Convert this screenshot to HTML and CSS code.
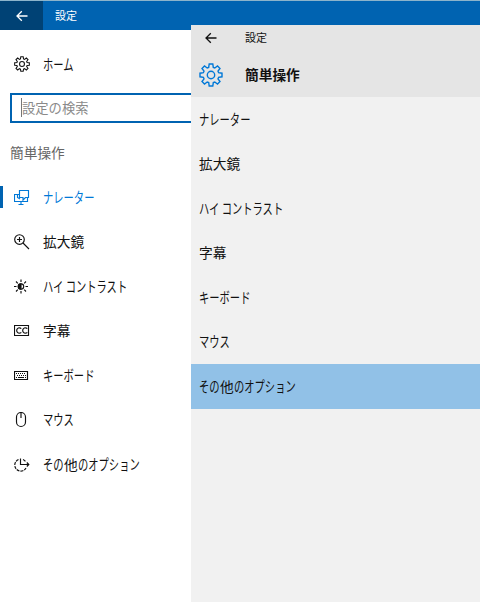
FILE: index.html
```html
<!DOCTYPE html>
<html lang="ja">
<head>
  <meta charset="UTF-8">
  <title>設定</title>
  <meta name="viewport" content="width=device-width, initial-scale=1.0">
  <link rel="stylesheet" href="styles.css">
</head>
<body>

  <!-- shared gear outline -->
  <svg class="defs" width="0" height="0">
    <symbol id="gear" viewBox="0 0 24 24">
      <path d="M9.7 4.4 10.2 1h3.6l.5 3.4 1.5.6 2.7-2 2.5 2.5-2 2.7.6 1.5 3.4.5v3.6l-3.4.5-.6 1.5 2 2.7-2.5 2.5-2.7-2-1.5.6-.5 3.4h-3.6l-.5-3.4-1.5-.6-2.7 2L3 18.500l2-2.700-.6-1.500L1 13.800v-3.600l3.400-.5.6-1.500L3 5.500 5.500 3l2.700 2z"/>
      <circle cx="12" cy="12" r="3.700"/>
    </symbol>
  </svg>

  <div class="window">
    <header class="titlebar">
      <div class="back">
        <svg class="arrow" width="12" height="12" viewBox="0 0 12 12"><path d="M11.500 6H1M5.800 1.200 1 6l4.800 4.800"/></svg>
      </div>
      <span class="title">設定</span>
    </header>

    <nav class="sidebar">
      <a class="item home">
        <svg class="icon" width="16" height="16"><use href="#gear"/></svg>
        <span class="kana">ホーム</span>
      </a>
      <div class="search"><span class="caret"></span>設定の検索</div>
      <h2>簡単操作</h2>
      <a class="item active">
        <svg class="icon" width="16" height="16" viewBox="0 0 16 16"><path d="M5.500.5h9v7h-3l-2.500 2.500v-2.500H5.500zM5.500 4.500h-5v7h13v-4M7 11.500v3M4.500 14.500h5M3.500 4.500v3l2.500 1.500"/></svg>
        <span class="kana">ナレーター</span>
      </a>
      <a class="item">
        <svg class="icon" width="16" height="16" viewBox="0 0 16 16"><circle cx="5.500" cy="5.500" r="4.800"/><path d="M9 9l6 6M5.500 3v5M3 5.500h5"/></svg>
        <span>拡大鏡</span>
      </a>
      <a class="item">
        <svg class="icon" width="16" height="16" viewBox="0 0 16 16"><circle cx="7" cy="7.500" r="2.700"/><path class="solid" d="M7 4.800a2.700 2.700 0 0 0 0 5.400z"/><path d="M7 .5V3M7 12v2.500M0 7.500h2.500M11.500 7.500H14M2 2.500l1.800 1.800M10.200 10.700l1.800 1.800M2 12.500l1.800-1.800M10.200 4.300 12 2.500"/></svg>
        <span class="kana">ハイ コントラスト</span>
      </a>
      <a class="item">
        <svg class="icon" width="16" height="16" viewBox="0 0 16 16"><path d="M.5 2.500h14v10H.5zM7.300 5.600A2.700 2.700 0 1 0 7.300 9.400M13.300 5.600a2.700 2.700 0 1 0 0 3.800"/></svg>
        <span>字幕</span>
      </a>
      <a class="item">
        <svg class="icon" width="16" height="16" viewBox="0 0 16 16"><path d="M.5 3.500h13v8H.5z"/><path class="keys" d="M2 5.500h10M3 7.500h9"/><path d="M4 9.500h6M2 9.500h1M11 9.500h1"/></svg>
        <span class="kana">キーボード</span>
      </a>
      <a class="item">
        <svg class="icon" width="16" height="16" viewBox="0 0 16 16"><rect x="2.500" y=".5" width="9" height="14" rx="4.500"/><path d="M7 1v5"/></svg>
        <span class="kana">マウス</span>
      </a>
      <a class="item">
        <svg class="icon" width="16" height="16" viewBox="0 0 16 16"><path d="M6.500 1.500v6H15M12.800 5.500l2 2-2 2"/><path class="ring" d="M4.500 2.500A6 6 0 1 0 12 11M9 2.500q1.800.7 2.500 2"/></svg>
        <span class="kana lead">その</span><span>他</span><span class="kana">のオプション</span>
      </a>
    </nav>

    <section class="panel">
      <header class="panel-head">
        <div class="panel-title">
          <svg class="arrow" width="12" height="12" viewBox="0 0 12 12"><path d="M11.500 6H1M5.800 1.200 1 6l4.800 4.800"/></svg>
          <span>設定</span>
        </div>
        <div class="panel-name">
          <svg class="gear" width="24" height="24"><use href="#gear"/></svg>
          <h1>簡単操作</h1>
        </div>
      </header>
      <div class="list">
        <a class="row"><span class="kana">ナレーター</span></a>
        <a class="row"><span>拡大鏡</span></a>
        <a class="row"><span class="kana">ハイ コントラスト</span></a>
        <a class="row"><span>字幕</span></a>
        <a class="row"><span class="kana">キーボード</span></a>
        <a class="row"><span class="kana">マウス</span></a>
        <a class="row selected"><span class="kana lead">その</span><span>他</span><span class="kana">のオプション</span></a>
      </div>
    </section>
  </div>

</body>
</html>
```
FILE: styles.css
```css
* {
  box-sizing: border-box;
}
body {
  margin: 0;
  font-family: "Noto Sans CJK JP", sans-serif;
  font-size: 13.7px;
  line-height: 20px;
  color: #111;
  background: #fff;
}
.defs {
  position: absolute;
}
svg {
  fill: none;
  stroke: currentColor;
  stroke-width: 1.15;
  flex: none;
}
.window {
  position: relative;
  height: 603px;
  overflow: hidden;
}
.titlebar {
  display: flex;
  height: 30px;
  background: #0063b1;
  border-top: 1px solid #8cb4cb;
  color: #fff;
}
.back {
  display: flex;
  align-items: center;
  justify-content: center;
  width: 43px;
  background: #004275;
}
.arrow {
  stroke-width: 1.3;
}
.title {
  margin-left: 12px;
  font-size: 11px;
  line-height: 29px;
}
.sidebar {
  padding-top: 12px;
}
.item {
  display: flex;
  align-items: center;
  height: 44.5px;
  padding: 0 0 1px 14px;
  white-space: nowrap;
}
.icon {
  margin: 2px 13px 0 0;
}
.home .icon {
  margin-top: 0;
  stroke-width: 1.6;
}
/* proportional-looking kana, kanji keep their full width */
.kana {
  display: inline-block;
  font-size: 14.6px;
  transform: scaleX(0.705);
  transform-origin: left;
}
.lead {
  margin-right: -0.57em;
}
.active {
  color: #0078d7;
  background: linear-gradient(#0063b1, #0063b1) 0 center / 3px 22px no-repeat;
}
.solid {
  fill: currentColor;
}
.keys {
  stroke-dasharray: 1 1;
}
.ring {
  stroke-dasharray: 3 1;
}
.search {
  display: flex;
  align-items: center;
  height: 30px;
  margin: 6px 0 0 10px;
  padding-left: 9px;
  border: 2px solid #0063b1;
  font-size: 13.3px;
  color: #8a8a8a;
}
.caret {
  width: 1px;
  height: 19px;
  background: #777;
}
h2 {
  margin: 19px 0 13.5px 10px;
  font-size: 13.7px;
  font-weight: 400;
  line-height: 20px;
  color: #666;
}
/* fly-out lying over the settings window */
.panel {
  position: absolute;
  left: 191px;
  top: 25px;
  right: 0;
  bottom: 1px;
  background: #f1f1f1;
}
.panel-head {
  height: 72px;
  background: #e5e5e5;
}
.panel-title {
  display: flex;
  align-items: center;
  height: 25px;
  padding-left: 14px;
  font-size: 11px;
}
.panel-title span {
  margin: -2px 0 0 28px;
}
.panel-name {
  display: flex;
  align-items: center;
  height: 50px;
  padding-left: 8px;
}
.gear {
  color: #0078d7;
  stroke-width: 1.4;
}
h1 {
  margin: -2px 0 0 22px;
  font-size: 13.7px;
  font-weight: 700;
}
.row {
  display: flex;
  align-items: center;
  height: 44.5px;
  padding: 0 0 1px 8px;
  white-space: nowrap;
}
.selected {
  background: #91c1e7;
}
```
